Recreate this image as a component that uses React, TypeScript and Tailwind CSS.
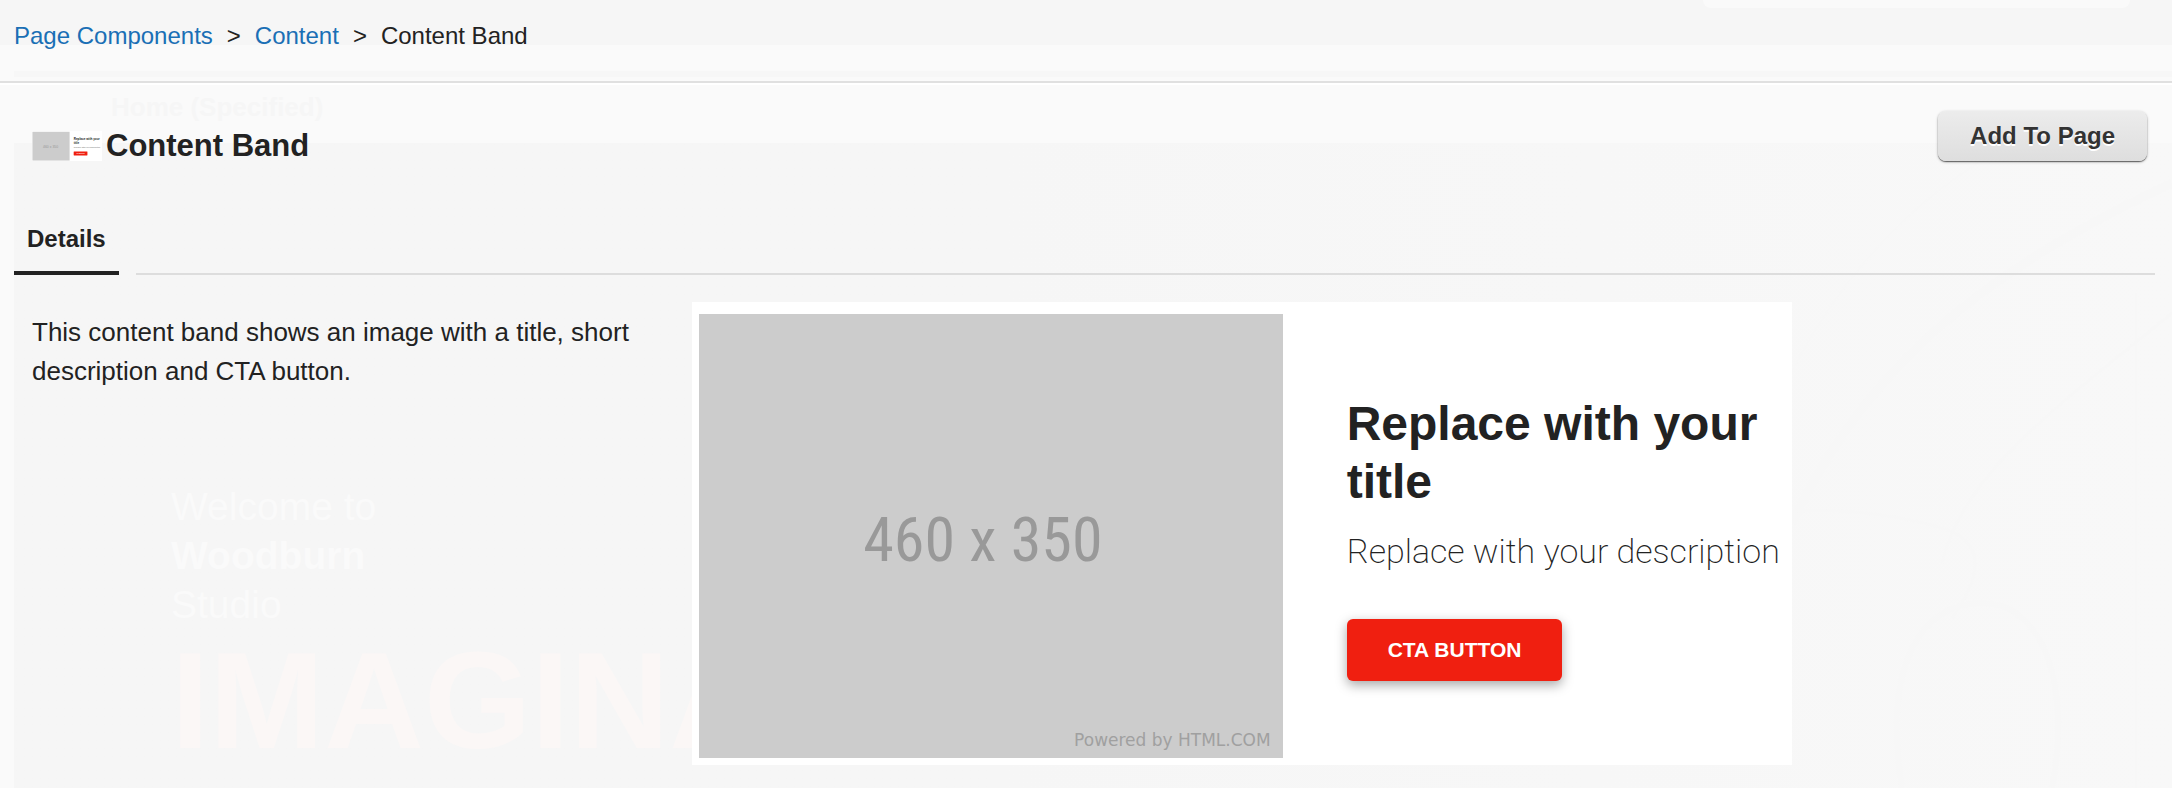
const crumbs = [
  { label: "Page Components", href: "#components" },
  { label: "Content", href: "#content" },
];

// Page underneath the translucent panel, only just showing through
function Backdrop() {
  return (
    <div aria-hidden="true" className="pointer-events-none absolute inset-0 select-none overflow-hidden">
      <div className="h-[45px] bg-[#f6f6f6]">
        <div className="mr-[42px] ml-auto h-2 w-[427px] rounded-b-3xl bg-[#fafafa]" />
      </div>
      <div className="h-[26px]" />
      <div className="ml-[14px] h-[6px] bg-[#f7f7f7]" />
      <div className="h-[66px] pt-[14px] pl-[111px]">
        <span className="block text-[26px] font-bold leading-8 text-[#f6f6f6]">Home (Specified)</span>
      </div>
      <div className="relative ml-[14px] h-full bg-linear-to-r from-[#f6f6f6] from-45% to-[#f8f8f8]">
        <svg className="absolute right-0 top-0 h-[645px] w-[420px]" viewBox="0 0 420 645" fill="none" stroke="#f7f7f7">
          <path d="M226 20C130 80 40 190 0 330" strokeWidth="2" />
          <path d="M420 40C250 120 120 210 40 380" strokeWidth="9" />
          <path d="M420 170C310 260 210 330 190 420" strokeWidth="3" />
          <path d="M0 375C60 360 140 370 190 385S225 440 200 475" strokeWidth="3" />
          <path d="M150 645C130 520 170 460 230 460S320 540 300 645" strokeWidth="6" />
          <path d="M384 150V645" strokeWidth="2" />
        </svg>
        <div className="px-[157px] pt-[339px] text-[39px] leading-[49px] text-[#fafafa]">
          <p>Welcome to</p>
          <p className="font-bold">Woodburn</p>
          <p>Studio</p>
          <p className="mt-[2px] text-[138px] font-bold leading-[138px] text-[#fbf7f6]">IMAGINATION</p>
        </div>
      </div>
    </div>
  );
}

function Thumbnail() {
  return (
    <svg className="h-[30px] w-[70px]" viewBox="0 0 1100 463" preserveAspectRatio="none" role="img" aria-label="Content Band thumbnail">
      <rect width="1100" height="463" fill="#fff" />
      <rect x="7" y="12" width="584" height="444" fill="#ccc" />
      <text x="292" y="256" textAnchor="middle" fontSize="54" fill="#999">460 x 350</text>
      <g fill="#222">
        <text x="655" y="139" fontSize="48" fontWeight="700">Replace with your</text>
        <text x="655" y="197" fontSize="48" fontWeight="700">title</text>
        <text x="655" y="260" fontSize="32" fill="#666">Replace with your description</text>
      </g>
      <rect x="655" y="316" width="216" height="62" rx="6" fill="#f01f10" />
      <text x="763" y="355" textAnchor="middle" fontSize="20" fontWeight="700" fill="#fff">CTA BUTTON</text>
    </svg>
  );
}

function BandPreview() {
  return (
    <div className="flex items-center bg-white pt-3 pb-[7px] pl-[7px]">
      <div className="flex aspect-[460/350] w-[53.4%] shrink-0 flex-col bg-[#ccc]">
        <div className="flex flex-1 items-center justify-center pt-9 pr-4 font-['Roboto_Condensed','Liberation_Sans',sans-serif] text-[62px] leading-none text-[#999]">
          460 x 350
        </div>
        <p className="pr-3 pb-2 text-right font-['DejaVu_Sans',sans-serif] text-[17px] leading-5 text-[#a0a0a0]">
          Powered by HTML.COM
        </p>
      </div>
      <div className="min-w-0 flex-1 pt-1 pl-16">
        <h2 className="text-5xl font-bold leading-[58px]">Replace with your title</h2>
        <p className="mt-4 whitespace-nowrap font-['Roboto',sans-serif] text-[34px] font-extralight leading-[48px]">
          Replace with your description
        </p>
        <button
          type="button"
          className="mt-11 h-[62px] rounded-md bg-[#f01f10] px-[41px] text-[21px] font-bold text-white shadow-[0_4px_12px_rgba(0,0,0,0.35)]"
        >
          CTA BUTTON
        </button>
      </div>
    </div>
  );
}

export default function App() {
  return (
    <div className="relative min-h-screen overflow-hidden bg-[#fafafa] font-['Liberation_Sans',Arial,sans-serif] text-[#222]">
      <Backdrop />

      <div className="relative">
        {/* Breadcrumb */}
        <nav aria-label="Breadcrumb" className="border-b-2 border-[#e0e0e0] px-[14px] pt-5 pb-[29px] text-2xl shadow-[0_2px_0_#fff]">
          <ol className="flex items-center gap-[14px]">
            {crumbs.map((crumb) => (
              <li key={crumb.label} className="flex items-center gap-[14px]">
                <a href={crumb.href} className="text-[#1a6fb5]">{crumb.label}</a>
                <span>&gt;</span>
              </li>
            ))}
            <li aria-current="page">Content Band</li>
          </ol>
        </nav>

        {/* Title row */}
        <header className="flex items-start justify-between pt-7 pr-[25px] pl-8">
          <div className="flex items-center gap-1 pt-[17px]">
            <Thumbnail />
            <h1 className="text-[31px] font-bold leading-9">Content Band</h1>
          </div>
          <button
            type="button"
            className="h-[50px] rounded-lg bg-linear-to-b from-[#ececec] to-[#dedede] px-8 text-2xl font-bold text-[#333] shadow-[0_1px_1px_rgba(0,0,0,0.5),0_1px_3px_rgba(0,0,0,0.3)] text-shadow-[0_2px_0_#fff]"
          >
            Add To Page
          </button>
        </header>

        {/* Tabs */}
        <div role="tablist" className="flex items-end gap-[17px] pt-[59px] pr-[17px] pl-[14px]">
          <button type="button" role="tab" aria-selected="true" className="border-b-4 border-[#222] px-[13px] pb-4 text-2xl font-bold">
            Details
          </button>
          <div className="h-[2px] flex-1 bg-[#ddd]" />
        </div>

        {/* Details */}
        <main className="grid grid-cols-[33fr_55fr_18fr] items-start pt-[27px] pr-5 pl-8">
          <p className="pt-[11px] pr-12 text-[26px] leading-[39px]">
            This content band shows an image with a title, short description and CTA button.
          </p>
          <BandPreview />
        </main>
      </div>
    </div>
  );
}
